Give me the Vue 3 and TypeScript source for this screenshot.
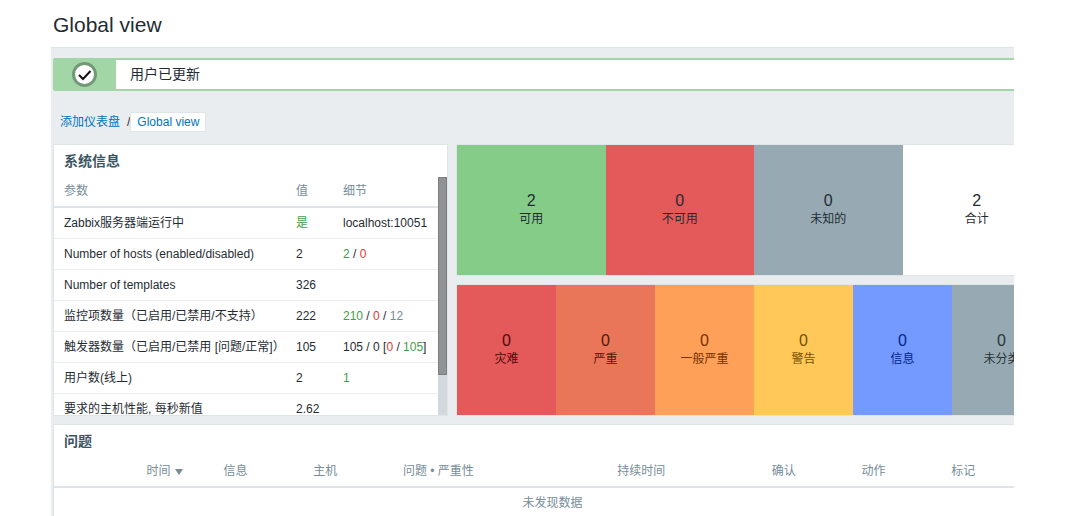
<script setup lang="ts">
type Tone = 'plain' | 'green' | 'red' | 'grey'

interface Part {
  text: string
  tone: Tone
}

interface InfoRow {
  name: string
  value: Part
  details: Part[]
}

interface Tile {
  count: number
  label: string
  kind: string
}

const t = (text: string, tone: Tone = 'plain'): Part => ({ text, tone })

const infoRows: InfoRow[] = [
  { name: 'Zabbix服务器端运行中', value: t('是', 'green'), details: [t('localhost:10051')] },
  { name: 'Number of hosts (enabled/disabled)', value: t('2'), details: [t('2', 'green'), t(' / '), t('0', 'red')] },
  { name: 'Number of templates', value: t('326'), details: [] },
  {
    name: '监控项数量（已启用/已禁用/不支持）',
    value: t('222'),
    details: [t('210', 'green'), t(' / '), t('0', 'red'), t(' / '), t('12', 'grey')],
  },
  {
    name: '触发器数量（已启用/已禁用 [问题/正常]）',
    value: t('105'),
    details: [t('105 / 0 ['), t('0', 'red'), t(' / '), t('105', 'green'), t(']')],
  },
  { name: '用户数(线上)', value: t('2'), details: [t('1', 'green')] },
  { name: '要求的主机性能, 每秒新值', value: t('2.62'), details: [] },
]

const hostTiles: Tile[] = [
  { count: 2, label: '可用', kind: 'available' },
  { count: 0, label: '不可用', kind: 'disaster' },
  { count: 0, label: '未知的', kind: 'unknown' },
  { count: 2, label: '合计', kind: 'total' },
]

const severityTiles: Tile[] = [
  { count: 0, label: '灾难', kind: 'disaster' },
  { count: 0, label: '严重', kind: 'high' },
  { count: 0, label: '一般严重', kind: 'average' },
  { count: 0, label: '警告', kind: 'warning' },
  { count: 0, label: '信息', kind: 'info' },
  { count: 0, label: '未分类', kind: 'unknown' },
]

const problemColumns: string[] = ['信息', '主机', '问题 • 严重性', '持续时间', '确认', '动作', '标记']
</script>

<template>
  <div class="page">
    <header class="page-title">
      <h1>Global view</h1>
    </header>
    <main class="content">
      <div class="board">
        <div class="message" role="status">
          <span class="message-mark">
            <svg width="25" height="25" viewBox="0 0 25 25" aria-hidden="true">
              <circle cx="12.5" cy="12.5" r="11" fill="#fff" stroke="#739876" stroke-width="3" />
              <path d="M7 13l4 4 7.5-8" fill="none" stroke="#111" stroke-width="2" />
            </svg>
          </span>
          <span class="message-text">用户已更新</span>
        </div>

        <nav class="crumbs">
          <a href="#dashboards">添加仪表盘</a>
          <span class="slash">/</span>
          <a href="#global" class="current">Global view</a>
        </nav>

        <div class="widgets">
          <section class="widget system">
            <h2>系统信息</h2>
            <div class="scroll">
              <table class="info-table">
                <colgroup>
                  <col />
                  <col class="col-value" />
                  <col class="col-details" />
                </colgroup>
                <thead>
                  <tr>
                    <th>参数</th>
                    <th>值</th>
                    <th>细节</th>
                  </tr>
                </thead>
                <tbody>
                  <tr v-for="row in infoRows" :key="row.name">
                    <td>{{ row.name }}</td>
                    <td :class="row.value.tone">{{ row.value.text }}</td>
                    <td>
                      <span v-for="(part, i) in row.details" :key="i" :class="part.tone">{{ part.text }}</span>
                    </td>
                  </tr>
                </tbody>
              </table>
              <div class="track"><div class="thumb"></div></div>
            </div>
          </section>

          <section class="widget tiles hosts">
            <div v-for="tile in hostTiles" :key="tile.label" class="tile" :class="tile.kind">
              <span class="count">{{ tile.count }}</span>
              <span>{{ tile.label }}</span>
            </div>
          </section>

          <section class="widget tiles">
            <div v-for="tile in severityTiles" :key="tile.label" class="tile" :class="tile.kind">
              <span class="count">{{ tile.count }}</span>
              <span>{{ tile.label }}</span>
            </div>
          </section>

          <section class="widget problems">
            <h2>问题</h2>
            <table>
              <colgroup>
                <col class="w-time" />
                <col class="w-small" />
                <col class="w-small" />
                <col class="w-problem" />
                <col class="w-duration" />
                <col class="w-small" />
                <col class="w-small" />
                <col />
              </colgroup>
              <thead>
                <tr>
                  <th class="time">
                    <a href="#time">时间<span class="arrow"></span></a>
                  </th>
                  <th v-for="name in problemColumns" :key="name">{{ name }}</th>
                </tr>
              </thead>
              <tbody>
                <tr>
                  <td colspan="8" class="empty">未发现数据</td>
                </tr>
              </tbody>
            </table>
          </section>
        </div>
      </div>
    </main>
  </div>
</template>

<style>
body {
  margin: 0;
  background: #fff;
}
</style>

<style scoped>
.page {
  box-sizing: border-box;
  display: flex;
  flex-direction: column;
  height: 100vh;
  overflow: hidden;
  padding: 0 58px 0 51px;
  font-family: "Liberation Sans", Arial, "Noto Sans CJK SC", sans-serif;
  font-size: 12px;
  line-height: 18px;
  color: #1f2c33;
}

.page-title {
  padding: 11px 2px 8px;
}

h1 {
  margin: 0;
  font-size: 21px;
  font-weight: 400;
  line-height: 28px;
}

.content {
  flex: 1;
  min-height: 0;
  overflow: hidden;
  border-top: 1px solid #dfe4e7;
  background: #e9edf0;
}

/* The board is wider than the visible area, which clips it on the right. */
.board {
  margin: 0 -38px 0 2px;
  padding-top: 10px;
}

.message {
  display: flex;
  border: 2px solid #a3d6a6;
  border-radius: 2px;
  background: #fff;
}

.message-mark {
  box-sizing: border-box;
  display: flex;
  align-items: center;
  justify-content: center;
  width: 61px;
  height: 29px;
  padding-right: 2px;
  background: #a3d6a6;
}

.message-text {
  padding-left: 14px;
  font-size: 14px;
  line-height: 28px;
}

.crumbs {
  display: flex;
  align-items: center;
  padding: 21px 7px 12px;
}

a {
  color: #0275b8;
  text-decoration: none;
}

.slash {
  padding-left: 7px;
}

.current {
  padding: 0 6px;
  border: 1px solid #dfe4e7;
  border-radius: 2px;
  background: #fff;
}

.widgets {
  display: grid;
  grid-template-columns: 395fr 596fr;
  grid-template-rows: 132px 132px;
  gap: 8px;
}

.widget {
  min-width: 0;
  border: 1px solid #dfe4e7;
  background: #fff;
}

h2 {
  margin: 0;
  padding: 7px 10px;
  font-size: 14px;
  font-weight: 700;
  line-height: 18px;
  color: #3c5563;
}

.system {
  display: flex;
  flex-direction: column;
  grid-row: span 2;
  overflow: hidden;
}

.scroll {
  display: flex;
  flex: 1;
  align-items: flex-start;
  min-height: 0;
  overflow: hidden;
}

table {
  flex: 1;
  width: 100%;
  border-collapse: separate;
  border-spacing: 0;
  table-layout: fixed;
}

.col-value {
  width: 47px;
}

.col-details {
  width: 105px;
}

th,
td {
  box-sizing: border-box;
  height: 31px;
  padding: 0 0 0 10px;
  border-bottom: 1px solid #ebeef0;
  text-align: left;
  white-space: nowrap;
}

th {
  padding-bottom: 2px;
  border-bottom: 2px solid #dfe4e7;
  font-weight: 400;
  color: #768d99;
}

td span {
  white-space: pre;
}

.green {
  color: #429e47;
}

.red {
  color: #e33734;
}

.grey {
  color: #768d99;
}

.track {
  align-self: stretch;
  width: 9px;
  background: #d2d9de;
}

.thumb {
  box-sizing: border-box;
  height: 83%;
  border: 1px solid #7c7e80;
  background: #909294;
}

.tiles {
  display: flex;
}

.tile {
  display: flex;
  flex: 1 1 0;
  flex-direction: column;
  align-items: center;
  justify-content: center;
}

.count {
  font-size: 16px;
}

.available {
  background: #86cc89;
}

.disaster {
  background: #e45959;
  color: #4d0a0a;
}

.high {
  background: #e97659;
  color: #52190b;
}

.average {
  background: #ffa059;
  color: #733100;
}

.warning {
  background: #ffc859;
  color: #734f00;
}

.info {
  background: #7499ff;
  color: #00268e;
}

.unknown {
  background: #97aab3;
  color: #2a353a;
}

.hosts .tile {
  color: #1f2c33;
}

.problems {
  grid-column: span 2;
}

.w-time {
  width: 16%;
}

.w-small {
  width: 9%;
}

.w-problem {
  width: 21.5%;
}

.w-duration {
  width: 15.5%;
}

.time {
  padding: 0 31px 2px 0;
  text-align: right;
}

.time a {
  color: inherit;
}

.arrow {
  display: inline-block;
  margin-left: 4px;
  border: 4px solid transparent;
  border-top: 6px solid #768d99;
  border-bottom: 0;
}

.empty {
  padding: 0;
  text-align: center;
  color: #768d99;
}
</style>
